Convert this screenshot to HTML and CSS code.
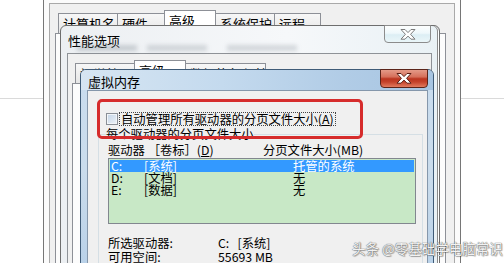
FILE: index.html
```html
<!DOCTYPE html>
<html lang="zh-CN">
<head>
<meta charset="utf-8">
<title>虚拟内存</title>
<link rel="stylesheet" href="styles.css">
</head>
<body>
<div class="desk">
  <div class="deskRule"></div>

  <!-- 系统属性 -->
  <div class="win sysWin">
    <div class="sysClient">
      <div class="tabs">
        <a class="tab t59">计算机名</a>
        <a class="tab t47">硬件</a>
        <a class="tab t51 on">高级</a>
        <a class="tab t59">系统保护</a>
        <a class="tab t46">远程</a>
      </div>
      <div class="tabPage"></div>
    </div>
  </div>

  <!-- 性能选项 -->
  <div class="win perfWin">
    <div class="titleBar">
      <span class="smear"></span>
      <span class="title">性能选项</span>
      <span class="closeBtn">
        <svg width="16" height="11" viewBox="0 0 16 11"><path d="M1 0.5H5L8 3.6L11 0.5H15L10.6 5.3L15 10.2H11L8 7.1L5 10.2H1L5.4 5.3Z" fill="#fff" stroke="#7b7b7b" stroke-width="1"/></svg>
      </span>
    </div>
    <div class="client perfClient">
      <div class="tabs">
        <a class="tab t59">视觉效果</a>
        <a class="tab t51 on">高级</a>
        <a class="tab t80">数据执行保护</a>
      </div>
      <div class="tabPage"></div>
    </div>
  </div>

  <!-- 虚拟内存 -->
  <div class="win vmWin">
    <div class="titleBar">
      <span class="title">虚拟内存</span>
      <span class="closeBtn active">
        <svg width="16" height="11" viewBox="0 0 16 11"><path d="M1 0.5H5L8 3.6L11 0.5H15L10.6 5.3L15 10.2H11L8 7.1L5 10.2H1L5.4 5.3Z" fill="#fff" stroke="#5a1e14" stroke-width="1"/></svg>
      </span>
    </div>
    <div class="client vmClient">
      <div class="autoRow">
        <span class="checkBox"></span>
        <span class="focusText">自动管理所有驱动器的分页文件大小(<u>A</u>)</span>
      </div>
      <div class="group">
        <div class="legend">每个驱动器的分页文件大小</div>
        <div class="listHead">
          <span class="colDrive">驱动器 ［卷标］(<u>D</u>)</span>
          <span>分页文件大小(MB)</span>
        </div>
        <ul class="driveList">
          <li class="sel"><span class="drv">C:</span><span class="vol">[系统]</span><span>托管的系统</span></li>
          <li><span class="drv">D:</span><span class="vol">[文档]</span><span>无</span></li>
          <li><span class="drv">E:</span><span class="vol">[数据]</span><span>无</span></li>
        </ul>
        <div class="info first"><span class="infoKey">所选驱动器:</span><span>C:&nbsp;&nbsp;&nbsp;[系统]</span></div>
        <div class="info"><span class="infoKey">可用空间:</span><span>55693 MB</span></div>
      </div>
    </div>
  </div>

  <div class="redMark"></div>
  <div class="watermark">头条 @零基础学电脑常识</div>
</div>
</body>
</html>
```

FILE: styles.css
```css
* {
  margin: 0;
  padding: 0;
  box-sizing: border-box;
}
html, body {
  width: 504px;
  height: 263px;
  overflow: hidden;
  background: #fff;
}
body {
  font-family: "Noto Sans CJK SC", "Noto Sans", sans-serif;
  font-size: 12.3px;
  color: #000;
}
.desk {
  position: relative;
  width: 504px;
  height: 263px;
  overflow: hidden;
}
.deskRule {
  position: absolute;
  left: 0;
  right: 0;
  top: 98px;
  border-top: 1px solid #dadada;
}
.win {
  position: absolute;
}

/* tabs shared */
.tabs {
  display: flex;
  align-items: flex-end;
  height: 23px;
  padding-left: 3px;
}
.tab {
  display: block;
  height: 20px;
  margin-right: -1px;
  border: 1px solid #8d9097;
  border-bottom: 0;
  background: linear-gradient(#f7f7f7, #e6e6e6);
  font-size: 13px;
  line-height: 19px;
  padding-left: 4px;
  white-space: nowrap;
  overflow: hidden;
}
.tab.on {
  height: 23px;
  background: #fff;
  line-height: 20px;
}
.t59 { width: 60px; }
.t47 { width: 48px; }
.t51 { width: 52px; }
.t46 { width: 47px; }
.t80 { width: 81px; }
.tabPage {
  height: 300px;
  border: 1px solid #8d9097;
  background: #fcfcfc;
}

/* 系统属性 */
.sysWin {
  left: 43px;
  top: 0;
  width: 418px;
  height: 263px;
  border-left: 1px solid #767676;
  border-right: 1px solid #767676;
  background: #fbfbfb;
  padding: 3px 5px 0 5px;
}
.sysClient {
  height: 280px;
  border: 1px solid #a9a9a9;
  background: #f0f0f0;
  padding: 6px 8px 0 5px;
}

/* title bars */
.titleBar {
  position: relative;
  display: flex;
  justify-content: space-between;
  align-items: flex-start;
}
.title {
  font-size: 13px;
  padding-left: 1px;
}
.closeBtn {
  display: flex;
  align-items: center;
  justify-content: center;
  width: 47px;
  height: 18px;
  margin-top: -1px;
  margin-right: 1px;
  border: 1px solid #8c8c8c;
  border-radius: 0 0 4px 4px;
  background: linear-gradient(#fdfefe, #eef8fb 45%, #dceef4 55%, #eaf6f9);
}
.closeBtn.active {
  width: 48px;
  height: 19px;
  margin-right: 0;
  border-color: #5b2419;
  background: linear-gradient(#e49a88, #d6705b 40%, #bb3520 52%, #c4422a 70%, #e27b5f);
}

/* 性能选项 */
.perfWin {
  left: 60px;
  top: 25px;
  width: 380px;
  height: 250px;
  border: 1px solid #6e6e6e;
  border-radius: 6px 6px 0 0;
  background: linear-gradient(90deg, #eceff2, #f6f8fa 60%, #e9f1f5);
  box-shadow: inset -1px 0 0 #fff, inset -2px 0 0 #8a8a8a;
  padding: 0 7px 0 6px;
}
.perfWin .titleBar {
  height: 27px;
}
.perfWin .title {
  padding-top: 7px;
  line-height: 16px;
}
.smear {
  position: absolute;
  left: 10px;
  top: 19px;
  width: 220px;
  height: 6px;
  background: linear-gradient(90deg, rgba(110, 120, 130, .3) 0 60px, transparent 60px 70px, rgba(110, 120, 130, .25) 70px 130px, transparent 130px 150px, rgba(110, 120, 130, .25) 150px 220px);
  filter: blur(2px);
}
.perfClient {
  height: 220px;
  border: 1px solid #8e9297;
  background: #f0f0f0;
  padding: 6px 0 0 4px;
}

/* 虚拟内存 */
.vmWin {
  left: 80px;
  top: 69px;
  width: 354px;
  height: 200px;
  border: 1px solid #3f5b77;
  border-radius: 6px 6px 0 0;
  background: linear-gradient(#c9dcee, #cadcec 100px, #b9d1e8);
  padding: 0 5px 0 6px;
}
.vmWin .titleBar {
  height: 20px;
  margin: 0 -5px 0 -6px;
  padding: 0 5px 0 6px;
  border-radius: 5px 5px 0 0;
  background: linear-gradient(90deg, #d6e5f2, #c4daee 40%, #b1cce6 75%, #a7c5e2);
}
.vmWin .title {
  padding-top: 3px;
  line-height: 17px;
}
.vmClient {
  height: 190px;
  border: 1px solid #8597ab;
  background: #f0f0f0;
}
.autoRow {
  display: flex;
  height: 14px;
  margin: 21px 0 0 18px;
}
.checkBox {
  width: 12px;
  height: 12px;
  margin-top: 1px;
  border: 1px solid #8a8f96;
  background: linear-gradient(135deg, #c3d4e6, #eef3f8);
  box-shadow: inset 0 0 0 1px #f2f5f8;
}
.focusText {
  height: 14px;
  margin-left: 1px;
  padding: 0 1px;
  border: 1px dotted #444;
  line-height: 12px;
}
.group {
  width: 325px;
  height: 150px;
  margin: 8px 0 0 10px;
  padding-left: 9px;
  border: 1px solid #d5dfe5;
  border-bottom: 0;
}
.legend {
  width: fit-content;
  height: 14px;
  margin: -8px 0 0 -2px;
  line-height: 14px;
  background: #f0f0f0;
}
.listHead {
  display: flex;
  height: 14px;
  margin-top: 2px;
  line-height: 14px;
}
.colDrive {
  width: 155px;
}
.driveList {
  list-style: none;
  width: 308px;
  height: 66px;
  margin-top: 1px;
  padding: 1px;
  border: 1px solid #82878f;
  background: #c8e8c6;
}
.driveList li {
  display: flex;
  height: 12px;
  line-height: 12px;
}
.driveList li.sel {
  background: #3399ff;
  color: #fff;
}
.drv {
  width: 34px;
  padding-left: 1px;
}
.vol {
  width: 149px;
}
.info {
  display: flex;
  height: 14px;
  line-height: 14px;
}
.info.first {
  margin-top: 12px;
}
.infoKey {
  width: 110px;
}

/* annotation + watermark */
.redMark {
  position: absolute;
  left: 97px;
  top: 99px;
  width: 266px;
  height: 40px;
  border: 3px solid #d62c2c;
  border-radius: 5px;
}
.watermark {
  position: absolute;
  left: 352px;
  top: 239px;
  font-size: 13.5px;
  line-height: 18px;
  color: #f2f2f2;
  text-shadow: 0 0 1px #666, 0 0 1px #666, 1px 1px 1px rgba(0, 0, 0, .3);
  white-space: nowrap;
}
```
